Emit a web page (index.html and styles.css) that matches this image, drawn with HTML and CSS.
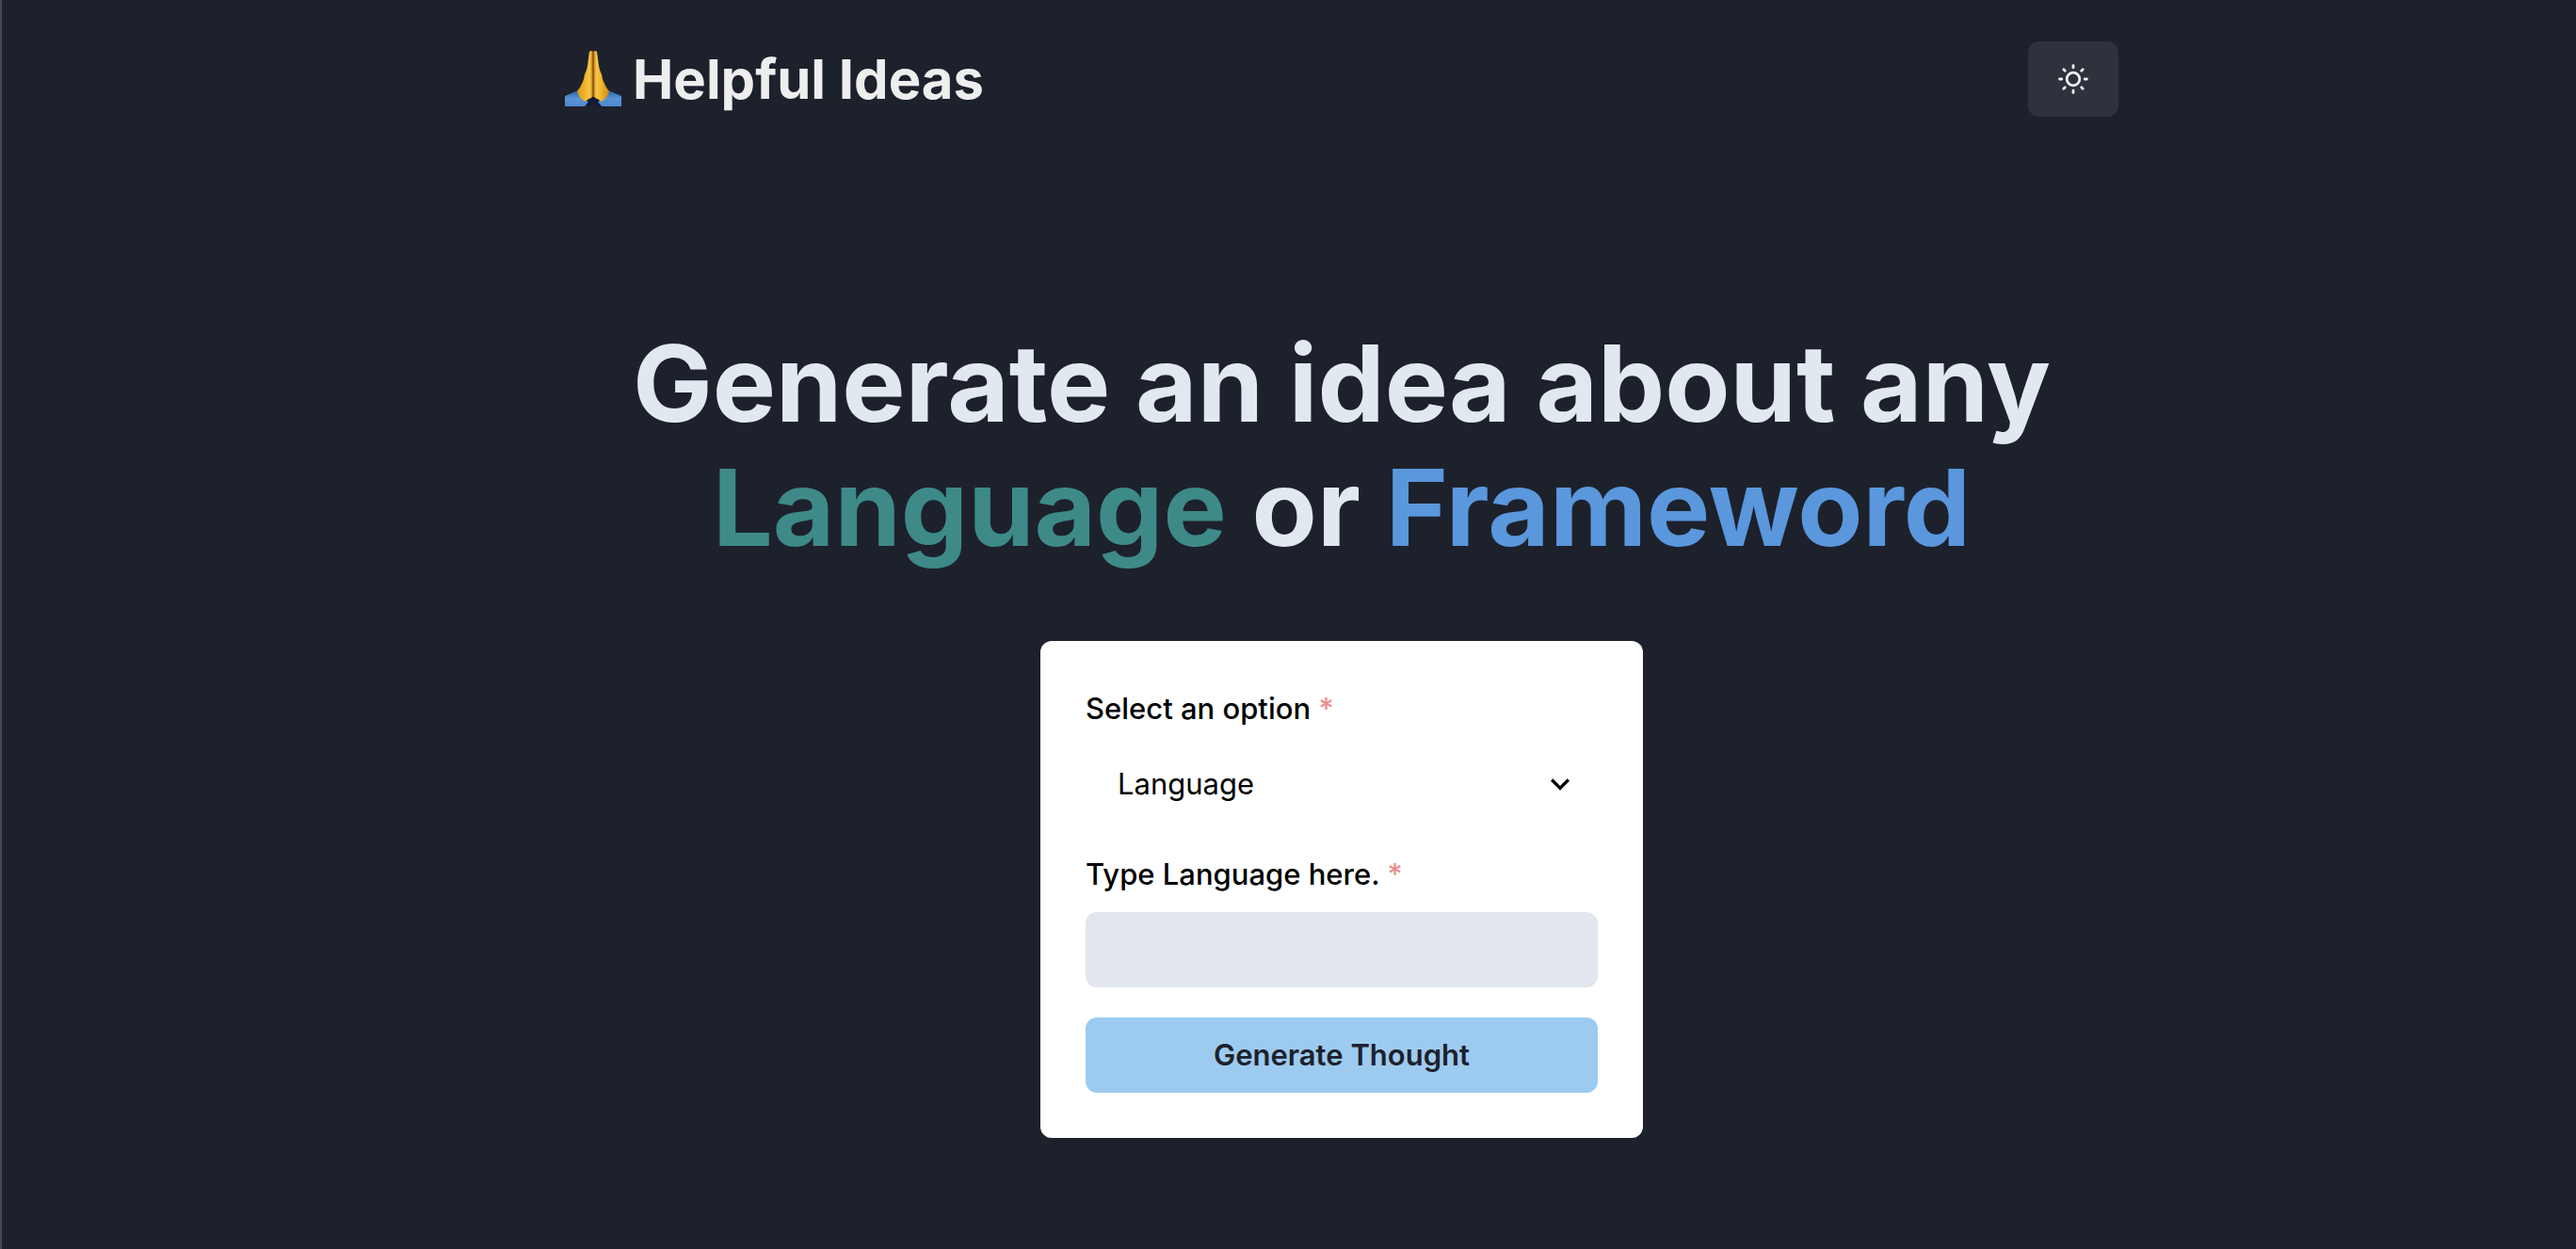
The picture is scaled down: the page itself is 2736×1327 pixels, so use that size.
FILE: index.html
```html
<!DOCTYPE html>
<html lang="en">
<head>
<meta charset="utf-8">
<title>Helpful Ideas</title>
<link rel="stylesheet" href="styles.css">
</head>
<body>
<div class="page">
  <header class="header">
    <h2 class="brand">
      <svg class="brand-icon" viewBox="0 0 60 60" role="img" aria-label="Folded hands">
        <defs>
          <linearGradient id="handLeft" x1="0" x2="1" y1="0" y2="0">
            <stop offset="0" stop-color="#d99a16"/><stop offset=".5" stop-color="#f0b429"/><stop offset=".8" stop-color="#f5c84b"/><stop offset="1" stop-color="#b8690f"/>
          </linearGradient>
          <linearGradient id="handRight" x1="1" x2="0" y1="0" y2="0">
            <stop offset="0" stop-color="#d08a10"/><stop offset=".5" stop-color="#f0b429"/><stop offset=".8" stop-color="#f5c84b"/><stop offset="1" stop-color="#b8690f"/>
          </linearGradient>
          <linearGradient id="sleeve" x1="0" x2="0" y1="0" y2="1">
            <stop offset="0" stop-color="#2563a8"/><stop offset=".5" stop-color="#5793d6"/><stop offset="1" stop-color="#4f8bd0"/>
          </linearGradient>
        </defs>
        <path d="M22 59 25 52 30 48 36 52 38 59 33 59 30 53 27 59z" fill="#101a3c"/>
        <path d="M0 48 14 42 22 53 25 54 21 59H0z" fill="url(#sleeve)"/>
        <path d="M60 48 46 42 38 53 35 54 39 59H60z" fill="url(#sleeve)"/>
        <path d="M26 1Q28-1 30 1V47Q30 49 28 50 24 51 22 54 15 51 13 43 20 34 21 25 24 20 25 8z" fill="url(#handLeft)"/>
        <path d="M34 1Q32-1 30 1V47Q30 49 32 50 36 51 38 54 45 51 47 43 40 34 39 25 36 20 35 8z" fill="url(#handRight)"/>
        <path d="M30 1V49" stroke="#925510" stroke-width="1.4"/>
      </svg>
      <span>Helpful Ideas</span>
    </h2>
    <button class="theme-toggle" type="button" aria-label="Toggle theme">
      <svg class="theme-icon" viewBox="0 0 32 32" fill="none" stroke="currentColor" stroke-width="2.8" stroke-linecap="round">
        <circle cx="16" cy="16" r="6.8"/>
        <path d="M16 1.6v2.2M16 28.2v2.2M1.6 16h2.2M28.2 16h2.2M5.8 5.8l1.5 1.5M24.7 24.7l1.5 1.5M5.8 26.2l1.5-1.5M24.7 7.3l1.5-1.5"/>
      </svg>
    </button>
  </header>
  <main class="main">
    <h1 class="title">Generate an idea about any<br><span class="title-language">Language</span> or <span class="title-framework">Frameword</span></h1>
    <form class="card">
      <div class="field">
        <label class="label" for="option">Select an option <span class="required">*</span></label>
        <div class="select-wrap">
          <select class="control select" id="option">
            <option>Language</option>
            <option>Framework</option>
          </select>
          <svg class="chevron" viewBox="0 0 24 24" aria-hidden="true"><path fill="currentColor" d="M16.59 8.59 12 13.17 7.41 8.59 6 10l6 6 6-6z"/></svg>
        </div>
      </div>
      <div class="field">
        <label class="label" for="name">Type Language here. <span class="required">*</span></label>
        <input class="control input" id="name" type="text">
      </div>
      <button class="submit" type="button">Generate Thought</button>
    </form>
  </main>
</div>
</body>
</html>
```
FILE: styles.css
```css
* {
  box-sizing: border-box;
}

body {
  margin: 0;
  min-height: 100vh;
  background: #1d212c;
  border-left: 2px solid #454a55;
  padding-left: 112px;
  font-family: Inter, "Liberation Sans", sans-serif;
  font-size: 31px;
  line-height: 48px;
  color: #000;
}

.page {
  max-width: 1650px;
  margin: 0 auto;
  padding-top: 44px;
}

.header {
  display: flex;
  align-items: center;
  justify-content: space-between;
}

.brand {
  display: flex;
  align-items: center;
  gap: 12px;
  margin: 0;
  font-size: 58px;
  line-height: 80px;
  font-weight: 700;
  color: #eeeeef;
}

.brand-icon {
  width: 60px;
  height: 60px;
}

.theme-toggle {
  display: flex;
  align-items: center;
  justify-content: center;
  width: 96px;
  height: 80px;
  padding: 0;
  border: 0;
  border-radius: 12px;
  background: #2f323d;
  color: #f0f0f1;
}

.theme-icon {
  width: 32px;
  height: 32px;
}

.main {
  display: flex;
  flex-direction: column;
  align-items: center;
  gap: 76px;
  padding-top: 217px;
}

.title {
  margin: 0;
  font-size: 113px;
  line-height: 132px;
  font-weight: 700;
  text-align: center;
  color: #e2e8f0;
}

.title-language {
  color: #3d8a89;
}

.title-framework {
  color: #5a97dc;
}

.card {
  display: flex;
  flex-direction: column;
  gap: 32px;
  width: 100%;
  max-width: 640px;
  padding: 48px;
  border-radius: 12px;
  background: #fff;
}

.field {
  display: flex;
  flex-direction: column;
  gap: 16px;
}

.label {
  font-weight: 500;
}

.required {
  color: #ec8c89;
}

.control {
  width: 100%;
  height: 80px;
  border: 2px solid transparent;
  border-radius: 12px;
  padding: 0 32px;
  font: inherit;
  color: #000;
}

.select-wrap {
  position: relative;
}

.select {
  display: block;
  appearance: none;
  background: #fff;
}

.chevron {
  position: absolute;
  top: 20px;
  right: 20px;
  width: 40px;
  height: 40px;
  pointer-events: none;
}

.input {
  background: #e2e7ef;
}

.submit {
  height: 80px;
  border: 0;
  border-radius: 12px;
  background: #9dcbf0;
  color: #1d212c;
  font: inherit;
  font-weight: 600;
}
```
